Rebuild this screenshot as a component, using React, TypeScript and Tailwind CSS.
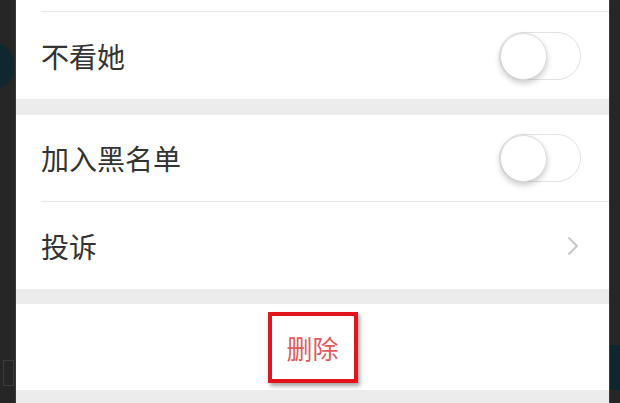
const font = { fontFamily: '"Noto Sans CJK SC", "Noto Sans", sans-serif' }

function Toggle() {
  return (
    <div className="relative h-[48px] w-[82px] rounded-full border border-[#e3e3e3] bg-white">
      <div className="absolute left-[0px] top-[0px] h-[47px] w-[47px] rounded-full border border-[#dcdcdc] bg-white shadow-[0_3px_6px_rgba(0,0,0,0.22)]" />
    </div>
  )
}

function Row({ label, children, divider }: { label: string; children?: React.ReactNode; divider?: boolean }) {
  return (
    <div className="flex h-[87px] items-center bg-white pl-[25px]">
      <div className={`flex h-full flex-1 items-center pr-[28px] ${divider ? "border-b border-[#e8e8e8]" : ""}`}>
        <span className="flex-1 text-[28px] text-[#333333]">{label}</span>
        {children}
      </div>
    </div>
  )
}

export default function App() {
  return (
    <div className="flex h-[403px] w-[620px] overflow-hidden bg-[#262626]" style={font}>
      <div className="relative w-[16px] shrink-0 border-r border-[#3a3a3a]">
        <div className="absolute left-[-30px] top-[42px] h-[48px] w-[44px] rounded-full bg-[#0e2730]" />
        <div className="absolute left-[3px] top-[360px] h-[26px] w-[11px] border border-[#3d3d3d]" />
      </div>

      <div className="flex flex-1 flex-col bg-[#ececec]">
        <div className="h-[12px] bg-white pl-[25px]">
          <div className="h-full border-b border-[#e8e8e8]" />
        </div>
        <Row label="不看她">
          <Toggle />
        </Row>
        <div className="h-[16px] shrink-0" />
        <Row label="加入黑名单" divider>
          <Toggle />
        </Row>
        <Row label="投诉">
          <svg width="14" height="22" viewBox="0 0 14 22" className="mr-[1px]">
            <path d="M3 3l8 8-8 8" fill="none" stroke="#c6c6ca" strokeWidth="1.8" strokeLinecap="round" strokeLinejoin="round" />
          </svg>
        </Row>
        <div className="h-[15px] shrink-0" />
        <div className="flex h-[86px] items-center justify-center bg-white">
          <div className="flex h-[71px] w-[90px] items-center justify-center border-[4px] border-[#e3141c] shadow-[2px_3px_4px_rgba(0,0,0,0.35)]">
            <span className="text-[26px] text-[#e05a5e]">删除</span>
          </div>
        </div>
      </div>

      <div className="relative w-[11px] shrink-0 border-l border-[#3a3a3a]">
        <div className="absolute left-0 top-[345px] h-[45px] w-[11px] bg-[#0f2530]" />
      </div>
    </div>
  )
}
